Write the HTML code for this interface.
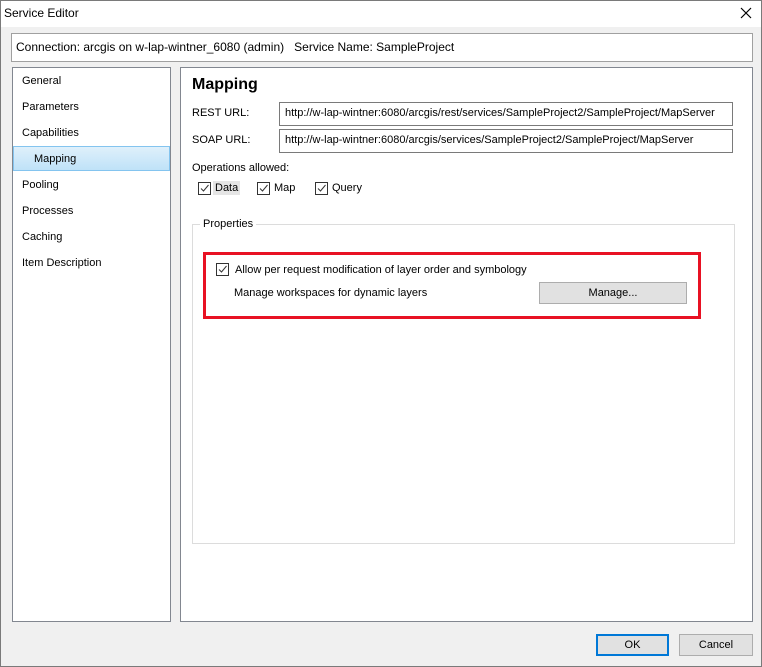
<!DOCTYPE html>
<html><head><style>
body{margin:0;width:762px;height:667px;overflow:hidden;font-family:"Liberation Sans",sans-serif;font-size:11px;color:#000;}
.win{position:absolute;left:0;top:0;width:762px;height:667px;background:#f0f0f0;}
.a{position:absolute;white-space:nowrap;}
.title{position:absolute;left:0;top:0;width:762px;height:27px;background:#fff;}
.box{position:absolute;background:#fff;border:1px solid #a0a0a0;box-sizing:border-box;}
.cb{position:absolute;width:11px;height:11px;border:1px solid #333;background:#fff;}
.cb svg{position:absolute;left:0;top:0}
.btn{position:absolute;background:#e1e1e1;border:1px solid #adadad;box-sizing:border-box;text-align:center;}
</style></head><body>
<div class="win">
<div class="title"></div>
<div class="a" style="left:4px;top:6px;font-size:12px">Service Editor</div>
<svg class="a" style="left:740px;top:7px" width="12" height="12"><path d="M1 1L11 11M11 1L1 11" stroke="#000" stroke-width="1.2"/></svg>
<div class="box" style="left:11px;top:33px;width:742px;height:29px"></div>
<div class="a" style="left:16px;top:40px;font-size:12px">Connection: arcgis on w-lap-wintner_6080 (admin)&nbsp;&nbsp; Service Name: SampleProject</div>
<div class="box" style="left:12px;top:67px;width:159px;height:555px;border-color:#828790"></div>
<div class="a" style="left:13px;top:146px;width:157px;height:25px;background:linear-gradient(#dff0fb,#bfe2f8);border:1px solid #84c4ef;box-sizing:border-box"></div>
<div class="a" style="left:22px;top:75px">General</div>
<div class="a" style="left:22px;top:101px">Parameters</div>
<div class="a" style="left:22px;top:127px">Capabilities</div>
<div class="a" style="left:34px;top:153px">Mapping</div>
<div class="a" style="left:22px;top:179px">Pooling</div>
<div class="a" style="left:22px;top:205px">Processes</div>
<div class="a" style="left:22px;top:231px">Caching</div>
<div class="a" style="left:22px;top:257px">Item Description</div>
<div class="box" style="left:180px;top:67px;width:573px;height:555px;border-color:#828790"></div>
<div class="a" style="left:192px;top:76px;font-size:16px;font-weight:bold">Mapping</div>
<div class="a" style="left:192px;top:107px">REST URL:</div>
<div class="a" style="left:192px;top:134px">SOAP URL:</div>
<div class="box" style="left:279px;top:102px;width:454px;height:24px;border-color:#7a7a7a"></div>
<div class="box" style="left:279px;top:129px;width:454px;height:24px;border-color:#7a7a7a"></div>
<div class="a" style="left:285px;top:107px">http://w-lap-wintner:6080/arcgis/rest/services/SampleProject2/SampleProject/MapServer</div>
<div class="a" style="left:285px;top:134px">http://w-lap-wintner:6080/arcgis/services/SampleProject2/SampleProject/MapServer</div>
<div class="a" style="left:192px;top:162px">Operations allowed:</div>
<div class="cb" style="left:198px;top:182px"><svg width="11" height="11"><path d="M2 5.5L4.5 8L9.5 2" stroke="#333" fill="none" stroke-width="1"/></svg></div>
<div class="a" style="left:213px;top:181px;background:#e5e5e5;padding:1px 2px">Data</div>
<div class="cb" style="left:257px;top:182px"><svg width="11" height="11"><path d="M2 5.5L4.5 8L9.5 2" stroke="#333" fill="none" stroke-width="1"/></svg></div>
<div class="a" style="left:274px;top:182px">Map</div>
<div class="cb" style="left:315px;top:182px"><svg width="11" height="11"><path d="M2 5.5L4.5 8L9.5 2" stroke="#333" fill="none" stroke-width="1"/></svg></div>
<div class="a" style="left:332px;top:182px">Query</div>
<div class="a" style="left:192px;top:224px;width:543px;height:320px;border:1px solid #dcdcdc;box-sizing:border-box"></div>
<div class="a" style="left:200px;top:218px;background:#fff;padding:0 3px">Properties</div>
<div class="a" style="left:203px;top:252px;width:498px;height:67px;border:3px solid #e81123;box-sizing:border-box"></div>
<div class="cb" style="left:216px;top:263px"><svg width="11" height="11"><path d="M2 5.5L4.5 8L9.5 2" stroke="#333" fill="none" stroke-width="1"/></svg></div>
<div class="a" style="left:235px;top:264px">Allow per request modification of layer order and symbology</div>
<div class="a" style="left:234px;top:287px">Manage workspaces for dynamic layers</div>
<div class="btn" style="left:539px;top:282px;width:148px;height:22px;line-height:20px">Manage...</div>
<div class="btn" style="left:596px;top:634px;width:73px;height:22px;line-height:18px;border:2px solid #0078d7">OK</div>
<div class="btn" style="left:679px;top:634px;width:74px;height:22px;line-height:20px">Cancel</div>
<div class="a" style="left:0;top:0;width:762px;height:667px;border:1px solid #7a7a7a;box-sizing:border-box"></div>
</div>
</body></html>
